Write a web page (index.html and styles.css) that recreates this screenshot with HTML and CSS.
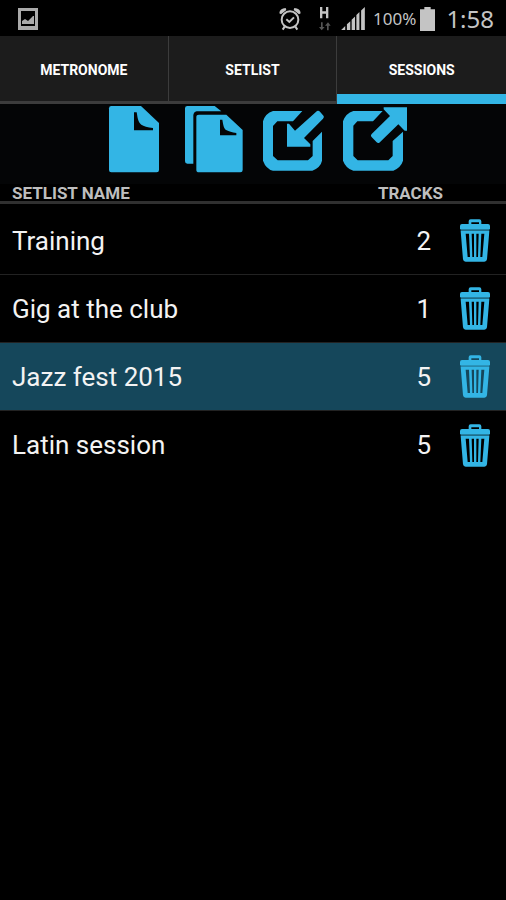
FILE: index.html
```html
<!DOCTYPE html>
<html lang="en">
<head>
<meta charset="utf-8">
<meta name="viewport" content="width=device-width, initial-scale=1">
<title>Sessions</title>
<link rel="stylesheet" href="styles.css">
</head>
<body>
<svg class="defs" aria-hidden="true">
  <symbol id="trash" viewBox="298 122 90 129">
    <path fill-rule="evenodd" d="M324 137V129Q324 123 330 123H356Q362 123 362 129V137H382Q388 137 388 143V153H298V143Q298 137 304 137ZM332 137H355V132H332Z"/>
    <path opacity=".6" d="M300 152H386V158H300Z"/>
    <path fill-rule="evenodd" d="M300 158H386L379 243Q378 250 371 250H315Q308 250 307 243ZM315 166L321 236H328L325 166ZM333 166L335 236H340V166ZM347 166V236H352L354 166ZM362 166L359 236H365L371 166Z"/>
  </symbol>
</svg>
<header class="status">
  <svg class="shot" viewBox="0 0 20 22" aria-hidden="true"><path fill-rule="evenodd" d="M0 0H20V22H0ZM3 3V18H17V3Z"/><path d="M4 16V13L7 11L10 13L15 8H16V16Z"/></svg>
  <svg class="alarm" viewBox="0 0 66 72" aria-hidden="true"><g fill="none" stroke="currentColor" stroke-width="6"><circle cx="33" cy="38" r="25"/><path d="M22 37L31 45L45 31M17 59L11 68M49 59L55 68"/></g><path d="M1 19Q2 4 20 3L22 9L6 22ZM65 19Q64 4 46 3L44 9L60 22Z"/></svg>
  <div class="net"><svg viewBox="0 0 36 72" aria-hidden="true"><path d="M3 0H10V13H21V0H28V34H21V20H10V34H3Z"/><path class="dim" d="M6 46H11V60H17L8 70L0 60H6ZM24 70H29V56H35L27 46L18 56H24Z"/></svg></div>
  <svg class="signal" viewBox="0 0 70 68" aria-hidden="true"><path d="M0 68L12 56V68ZM17 68V51L27 42V68ZM31 68V38L41 28V68ZM45 68V24L54 15V68ZM59 68V10L70 0V68Z"/></svg>
  <span class="percent">100%</span>
  <svg class="battery" viewBox="0 0 45 72" aria-hidden="true"><path d="M13 0H32V7H45V72H0V7H13Z"/></svg>
  <time class="clock">1:58</time>
</header>
<nav class="tabs">
  <a href="#metronome">METRONOME</a>
  <a href="#setlist">SETLIST</a>
  <a href="#sessions" class="active" aria-current="page">SESSIONS</a>
</nav>
<main>
  <div class="toolbar">
    <button type="button" aria-label="New session"><svg viewBox="-21 18 240 240"><path d="M34 24H123L177 75V216Q177 223 170 223H34Q27 223 27 216V31Q27 24 34 24Z"/><path class="fold" d="M102 43H110C113 58 113 72 124 80Q134 87 159 90V97H102Z"/></svg></button>
    <button type="button" aria-label="Duplicate session"><svg viewBox="219 18 240 240"><path d="M262 24H344L364 40H290Q281 42 280 52V197H262Q255 197 255 190V31Q255 24 262 24ZM297 50H379L428 96V216Q428 223 421 223H297Q289 223 289 216V57Q289 50 297 50Z"/><path class="fold" d="M360 65H367C370 81 371 92 380 97Q389 102 409 105V112H360Z"/></svg></button>
    <button type="button" aria-label="Import session"><svg viewBox="9 18 240 240"><path d="M69 39H157L129 70H82L69 84V174L83 187H174L188 174V129L216 101V188Q212 208 187 218H69Q48 213 39 188V70Q46 46 69 39Z"/><path d="M201 39Q206 37 210 41L221 54Q223 58 219 62L162 120L181 139V146H111V77H117L135 98Z"/></svg></button>
    <button type="button" aria-label="Export session"><svg viewBox="249 18 240 240"><path d="M310 39H398L369 70H322L310 83V174L323 187H415L428 174V129L459 101V188Q453 208 430 218H310Q288 212 279 188V70Q287 46 310 39Z"/><path d="M401 28H471V98H464L445 79L388 134Q384 137 380 133L364 116Q361 112 365 108L420 54L401 34Z"/></svg></button>
  </div>
  <table class="list">
    <thead><tr><th scope="col">SETLIST NAME</th><th scope="col" class="tracks">TRACKS</th><td class="action"></td></tr></thead>
    <tbody>
      <tr><td>Training</td><td class="count">2</td><td class="action"><button type="button" aria-label="Delete Training"><svg><use href="#trash"/></svg></button></td></tr>
      <tr><td>Gig at the club</td><td class="count">1</td><td class="action"><button type="button" aria-label="Delete Gig at the club"><svg><use href="#trash"/></svg></button></td></tr>
      <tr class="selected"><td>Jazz fest 2015</td><td class="count">5</td><td class="action"><button type="button" aria-label="Delete Jazz fest 2015"><svg><use href="#trash"/></svg></button></td></tr>
      <tr><td>Latin session</td><td class="count">5</td><td class="action"><button type="button" aria-label="Delete Latin session"><svg><use href="#trash"/></svg></button></td></tr>
    </tbody>
  </table>
</main>
</body>
</html>
```
FILE: styles.css
```css
* { box-sizing: border-box; }
body {
  margin: 0;
  min-height: 100vh;
  background: #000;
  color: #f3f3f3;
  font-family: Roboto, "Liberation Sans", sans-serif;
}
svg { display: block; fill: currentColor; }
button { padding: 0; border: 0; background: none; color: #33b5e5; cursor: pointer; }
.defs { display: none; }

.status {
  display: flex;
  align-items: center;
  height: 36px;
  padding: 1px 12px 0 18px;
  color: #c4c4c4;
}
.shot { width: 20px; height: 22px; margin-right: auto; color: #aaa; }
.alarm { width: 22px; height: 24px; margin-right: 18px; }
.net svg { width: 12px; height: 24px; }
.net { margin-right: 10px; }
.dim { fill: #555; }
.signal { width: 24px; height: 23px; margin-right: 8px; }
.percent { font: 17px "Noto Sans", sans-serif; margin-right: 4px; }
.battery { width: 15px; height: 24px; margin-right: 11px; }
.clock { font: 24px/36px "Noto Sans", sans-serif; }

.tabs {
  display: grid;
  grid-template-columns: repeat(3, 1fr);
  height: 68px;
  background: #1c1c1c;
}
.tabs a {
  display: flex;
  align-items: center;
  justify-content: center;
  padding-top: 2px;
  border-bottom: 3px solid #3c3c3c;
  color: #fff;
  font-size: 14px;
  font-weight: 700;
  text-decoration: none;
}
.tabs a:not(:last-child) { border-right: 1px solid #3c3c3c; }
.tabs .active {
  border-bottom-color: #33b5e5;
  box-shadow: inset 0 -7px #33b5e5;
}

.toolbar { display: flex; justify-content: center; height: 80px; background: #040506; }
.toolbar button, .toolbar svg { width: 80px; height: 80px; }
.fold { fill: #040506; }

.list { width: 100%; border-collapse: separate; border-spacing: 0; }
.list thead > tr > * {
  height: 20px;
  padding: 2px 0 0;
  border-bottom: 3px solid #303030;
  color: #bebebe;
  font-size: 17px;
  line-height: 15px;
  text-align: left;
}
.list tr > :first-child { padding-left: 12px; }
.list thead .tracks { text-align: right; }
.list .action { width: 63px; }
.list tbody::before { content: ""; display: block; height: 3px; }
.list tbody td {
  height: 68px;
  padding: 0;
  border-bottom: 1px solid #222;
  font-size: 26px;
}
.list tbody .selected td { background: #15475b; }
.list tbody tr:last-child td { border-bottom: 0; }
.list tbody td:first-child { padding-left: 12px; }
.list tbody .count { padding-right: 12px; text-align: right; }
.action button { display: block; margin: 0 auto; }
.action svg { width: 30px; height: 43px; }
```
